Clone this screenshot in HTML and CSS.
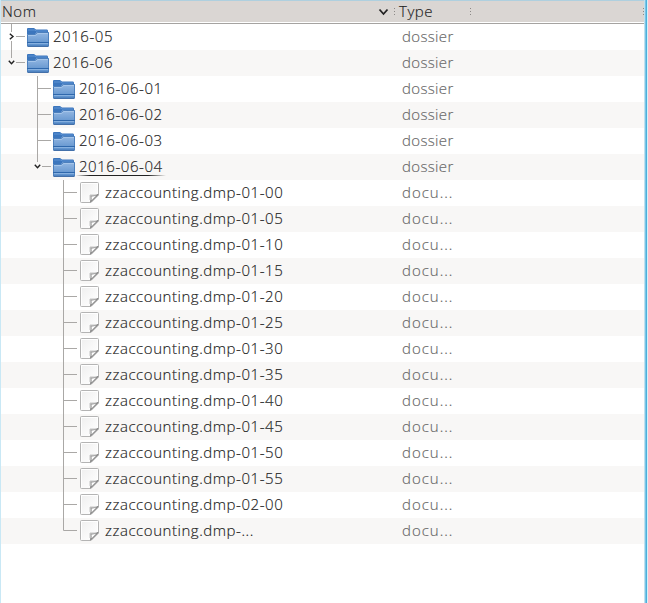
FILE: index.html
```
<!DOCTYPE html>
<html lang="fr">
<head>
<meta charset="utf-8">
<title>Dossiers</title>
<link rel="stylesheet" href="styles.css">
</head>
<body>
<svg class="defs" width="0" height="0">
  <defs>
    <linearGradient id="blue" x1="0" y1="0" x2="0" y2="1"><stop offset="0" stop-color="#96b9e3"/><stop offset="1" stop-color="#588dca"/></linearGradient>
    <linearGradient id="paper" x1="0" y1="0" x2="1" y2="1"><stop offset="0" stop-color="#eeeeee"/><stop offset=".6" stop-color="#fafafa"/><stop offset="1" stop-color="#fff"/></linearGradient>
    <symbol id="folder" viewBox="0 0 22 26">
      <path d="M0 5Q0 4 1 4H7L9 5.5H20Q21 5.5 21 7V11H0Z" fill="#3c76bd"/>
      <path d="M1 6H8L9 7H20" fill="none" stroke="#5c92d3"/>
      <path d="M0 10H8L10 8H22V21.5Q22 22.5 21 22.5H1Q0 22.5 0 21.5Z" fill="url(#blue)"/>
      <path d="M.5 22V10.5H8.3L10.3 8.5H21.5V22" fill="none" stroke="#4d80bd"/>
      <path d="M1 11.5H8.7L10.7 9.5H21" fill="none" stroke="#a5c5ea"/>
      <path d="M0 18.5H22" stroke="#2f68ac"/>
      <path d="M1 19.5H21" stroke="#86b0df"/>
      <path d="M.5 22.3H21.5" stroke="#2b5c9c"/>
    </symbol>
    <symbol id="doc" viewBox="0 0 22 26">
      <path d="M2.5 2.5H18.5Q19.5 2.5 19.5 3.5V15L12 22.5H2.5Q1.5 22.5 1.5 21.5V3.5Q1.5 2.5 2.5 2.5Z" fill="url(#paper)" stroke="#b4b4b4"/>
      <path d="M2.5 21.5V3.5H18.5V14" fill="none" stroke="#fff"/>
      <path d="M11.5 22.2Q12.5 19 11.8 15.8Q15.5 16.2 19.2 14.5Z" fill="#fff" stroke="#8f8f8f" stroke-width="1.2"/>
      <path d="M11 20V15H17" fill="none" stroke="#c4c4c4"/>
    </symbol>
    <symbol id="tee" viewBox="0 0 26 26"><path d="M10.5 0V26M10 12.5H24" class="line"/></symbol>
    <symbol id="corner" viewBox="0 0 26 26"><path d="M10.5 0V12.5H24" class="line"/></symbol>
    <symbol id="closed" viewBox="0 0 26 26"><path d="M10.5 0V8M10.5 17V26M15 12.5H24" class="line"/><path d="M8.8 9.8L12 12.5L8.8 15.2" class="arrow"/></symbol>
    <symbol id="open" viewBox="0 0 26 26"><path d="M10.5 0V8M15 12.5H24" class="line"/><path d="M7.8 10.8L10.5 13.8L13.2 10.8" class="arrow"/></symbol>
  </defs>
</svg>
<div class="view">
  <div class="header">
    <span class="col-name">Nom</span>
    <svg class="sort" width="11" height="8"><path d="M1.5 1.5L5.5 6L9.5 1.5"/></svg>
    <span class="grip"></span>
    <span class="col-type">Type</span>
    <span class="grip"></span>
    <span class="grip last"></span>
  </div>
  <div class="rows">
    <div class="row"><div class="name"><svg class="guide"><use href="#closed"/></svg><svg class="icon"><use href="#folder"/></svg><span>2016-05</span></div><span class="type">dossier</span></div>
    <div class="row"><div class="name"><svg class="guide"><use href="#open"/></svg><svg class="icon"><use href="#folder"/></svg><span>2016-06</span></div><span class="type">dossier</span></div>
    <div class="row l1"><div class="name"><svg class="guide"><use href="#tee"/></svg><svg class="icon"><use href="#folder"/></svg><span>2016-06-01</span></div><span class="type">dossier</span></div>
    <div class="row l1"><div class="name"><svg class="guide"><use href="#tee"/></svg><svg class="icon"><use href="#folder"/></svg><span>2016-06-02</span></div><span class="type">dossier</span></div>
    <div class="row l1"><div class="name"><svg class="guide"><use href="#tee"/></svg><svg class="icon"><use href="#folder"/></svg><span>2016-06-03</span></div><span class="type">dossier</span></div>
    <div class="row l1"><div class="name"><svg class="guide"><use href="#open"/></svg><svg class="icon"><use href="#folder"/></svg><span class="current">2016-06-04</span></div><span class="type">dossier</span></div>
    <div class="row l2"><div class="name"><svg class="guide"><use href="#tee"/></svg><svg class="icon"><use href="#doc"/></svg><span>zzaccounting.dmp-01-00</span></div><span class="type cut">docu...</span></div>
    <div class="row l2"><div class="name"><svg class="guide"><use href="#tee"/></svg><svg class="icon"><use href="#doc"/></svg><span>zzaccounting.dmp-01-05</span></div><span class="type cut">docu...</span></div>
    <div class="row l2"><div class="name"><svg class="guide"><use href="#tee"/></svg><svg class="icon"><use href="#doc"/></svg><span>zzaccounting.dmp-01-10</span></div><span class="type cut">docu...</span></div>
    <div class="row l2"><div class="name"><svg class="guide"><use href="#tee"/></svg><svg class="icon"><use href="#doc"/></svg><span>zzaccounting.dmp-01-15</span></div><span class="type cut">docu...</span></div>
    <div class="row l2"><div class="name"><svg class="guide"><use href="#tee"/></svg><svg class="icon"><use href="#doc"/></svg><span>zzaccounting.dmp-01-20</span></div><span class="type cut">docu...</span></div>
    <div class="row l2"><div class="name"><svg class="guide"><use href="#tee"/></svg><svg class="icon"><use href="#doc"/></svg><span>zzaccounting.dmp-01-25</span></div><span class="type cut">docu...</span></div>
    <div class="row l2"><div class="name"><svg class="guide"><use href="#tee"/></svg><svg class="icon"><use href="#doc"/></svg><span>zzaccounting.dmp-01-30</span></div><span class="type cut">docu...</span></div>
    <div class="row l2"><div class="name"><svg class="guide"><use href="#tee"/></svg><svg class="icon"><use href="#doc"/></svg><span>zzaccounting.dmp-01-35</span></div><span class="type cut">docu...</span></div>
    <div class="row l2"><div class="name"><svg class="guide"><use href="#tee"/></svg><svg class="icon"><use href="#doc"/></svg><span>zzaccounting.dmp-01-40</span></div><span class="type cut">docu...</span></div>
    <div class="row l2"><div class="name"><svg class="guide"><use href="#tee"/></svg><svg class="icon"><use href="#doc"/></svg><span>zzaccounting.dmp-01-45</span></div><span class="type cut">docu...</span></div>
    <div class="row l2"><div class="name"><svg class="guide"><use href="#tee"/></svg><svg class="icon"><use href="#doc"/></svg><span>zzaccounting.dmp-01-50</span></div><span class="type cut">docu...</span></div>
    <div class="row l2"><div class="name"><svg class="guide"><use href="#tee"/></svg><svg class="icon"><use href="#doc"/></svg><span>zzaccounting.dmp-01-55</span></div><span class="type cut">docu...</span></div>
    <div class="row l2"><div class="name"><svg class="guide"><use href="#tee"/></svg><svg class="icon"><use href="#doc"/></svg><span>zzaccounting.dmp-02-00</span></div><span class="type cut">docu...</span></div>
    <div class="row l2"><div class="name"><svg class="guide"><use href="#corner"/></svg><svg class="icon"><use href="#doc"/></svg><span>zzaccounting.dmp-...</span></div><span class="type cut">docu...</span></div>
  </div>
</div>
</body>
</html>
```
FILE: styles.css
```
* { box-sizing: border-box; }
body { margin: 0; overflow: hidden; }
.defs { position: absolute; }
.view {
  height: 603px;
  display: flex;
  flex-direction: column;
  padding: 0 4px 0 1px;
  background: linear-gradient(to right, #c9e8f5 1px, #fff 1px, #fff 644px, #d5eaf4 644px, #a9d8ec 645px, #4bb0dc 646px, #4bb0dc 647px, #d9eff8 647px);
  font: 300 15px/24px "Open Sans", "Noto Sans", sans-serif;
  letter-spacing: .55px;
  color: #232323;
  -webkit-text-stroke: .15px;
}
.header {
  height: 24px;
  flex: none;
  display: flex;
  align-items: center;
  background: linear-gradient(#afd0df 1px, #dad6d3 1px, #dad6d3 22px, #fff 22px, #fff 23px, #a5a3a1 23px);
  line-height: 22px;
}
.col-name, .col-type { height: 24px; }
.col-name { width: 377px; padding-left: 1px; }
.sort { width: 11px; fill: none; stroke: #222; stroke-width: 1.8; }
.grip { width: 1px; height: 8px; margin-left: 5px; background: repeating-linear-gradient(#8c8987 0 1px, transparent 1px 3px); }
.col-type { width: 75px; padding-left: 4px; }
.col-type + .grip { margin-left: 0; }
.last { margin-left: auto; }
.row { height: 26px; display: flex; }
.row:nth-child(even) { background: #f8f7f6; }
.name { width: 401px; display: flex; }
.l1 .name { padding-left: 26px; }
.l2 .name { padding-left: 52px; }
.guide { width: 26px; height: 26px; flex: none; }
.icon { width: 22px; height: 26px; margin-right: 4px; flex: none; }
.line { fill: none; stroke: #aaa8a6; }
.arrow { fill: none; stroke: #222; stroke-width: 1.4; }
.type { color: #666; letter-spacing: .35px; }
.cut { letter-spacing: 1px; }
.current { margin-left: -3px; padding: 0 3px; background: linear-gradient(to right, transparent, #222 15%, #222 80%, transparent) 0 21px / 100% 1px no-repeat; }
```
